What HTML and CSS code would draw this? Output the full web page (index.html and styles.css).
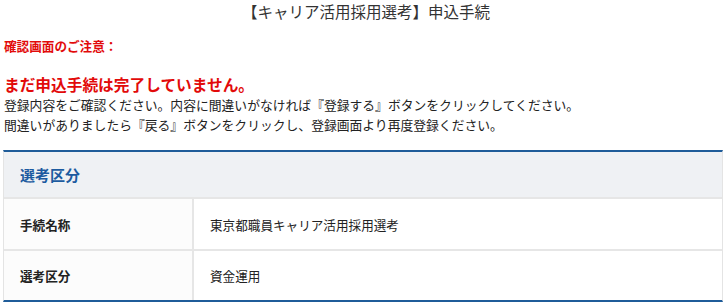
FILE: index.html
```html
<!DOCTYPE html>
<html>
<head>
    <title>申込手続</title>
    <link rel="stylesheet" href="styles.css">
</head>
<body>
    <h1 class="page-title">【キャリア活用採用選考】申込手続</h1>
    <div class="notice">
        <p class="notice-label">確認画面のご注意：</p>
        <p class="notice-big">まだ申込手続は完了していません。</p>
        <p class="notice-text">登録内容をご確認ください。内容に間違いがなければ『登録する』ボタンをクリックしてください。<br>間違いがありましたら『戻る』ボタンをクリックし、登録画面より再度登録ください。</p>
    </div>

    <div class="section">
        <div class="section-head">選考区分</div>
        <div class="row">
            <div class="row-label">手続名称</div>
            <div class="row-value">東京都職員キャリア活用採用選考</div>
        </div>
        <div class="row row-last">
            <div class="row-label">選考区分</div>
            <div class="row-value">資金運用</div>
        </div>
    </div>
</body>
</html>
```

FILE: styles.css
```css
body {
    margin: 0;
    padding: 0 3px;
    background-color: white;
    color: #222;
    font-family: "Noto Sans CJK JP", "Noto Sans", sans-serif;
    font-size: 12.8px;
}
.page-title {
    margin: 0;
    padding-left: 6px;
    font-size: 15.5px;
    font-weight: normal;
    line-height: 23px;
    text-align: center;
    color: #333;
}
.notice {
    padding-left: 1px;
}
.notice p {
    margin: 0;
}
.notice-label {
    margin-top: 13px !important;
    color: #e20a0a;
    font-weight: bold;
    font-size: 12.6px;
    line-height: 20px;
}
.notice-big {
    margin-top: 19px !important;
    color: #e20a0a;
    font-weight: bold;
    font-size: 15.7px;
    line-height: 20px;
}
.notice-text {
    line-height: 20px;
}
.section {
    margin-top: 15px;
    border-top: 2px solid #1f5c99;
    border-bottom: 2px solid #1f5c99;
    border-left: 1px solid #e4e4e4;
    border-right: 1px solid #e4e4e4;
}
.section-head {
    display: flex;
    align-items: center;
    height: 45px;
    padding: 0 16px;
    background-color: #eff1f4;
    color: #1d5ba0;
    font-weight: bold;
    font-size: 15px;
}
.row {
    display: flex;
    height: 50px;
    border-top: 2px solid #e6e6e6;
}
.row-last {
    height: 49px;
}
.row-label {
    display: flex;
    align-items: center;
    width: 156px;
    padding: 0 16px;
    background-color: #fcfcfc;
    border-right: 2px solid #e6e6e6;
    font-weight: bold;
    font-size: 12.6px;
}
.row-value {
    display: flex;
    align-items: center;
    flex: 1;
    padding-left: 16px;
    font-size: 12.6px;
}
```
